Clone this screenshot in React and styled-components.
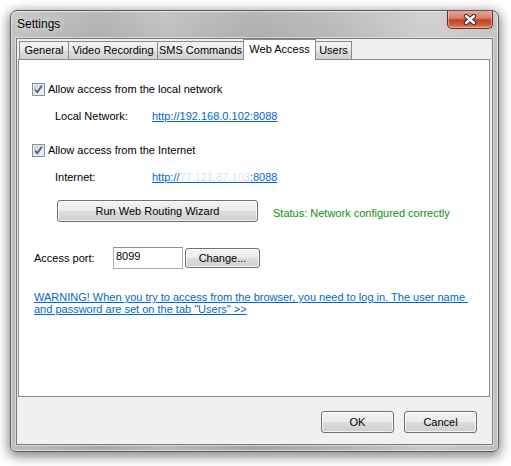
import React from "react";
import styled, { createGlobalStyle } from "styled-components";

const Global = createGlobalStyle`
  html, body { margin: 0; padding: 0; background: #ffffff; }
  body { font-family: "Liberation Sans", Arial, sans-serif; font-size: 11px; color: #000; }
  * { box-sizing: border-box; }
`;

const Stage = styled.div`
  width: 511px;
  height: 466px;
  padding: 10px 0 0 10px;
`;

const Window = styled.div`
  width: 489px;
  height: 442px;
  border: 1px solid #555a60;
  border-radius: 7px 7px 6px 6px;
  background:
    linear-gradient(180deg, rgba(255,255,255,0.18) 0%, rgba(255,255,255,0) 12%),
    linear-gradient(90deg, #bdbdbd 0%, #a9a9a9 18%, #b8b8b8 32%, #a6a6a6 50%, #b3b3b3 68%, #c9c9c9 85%, #bfbfbf 100%);
  box-shadow: inset 0 0 0 1px rgba(255,255,255,0.55), 0 3px 11px 2px rgba(0,0,0,0.45);
  display: flex;
  flex-direction: column;
  overflow: hidden;
`;

const TitleBar = styled.div`
  height: 27px;
  display: flex;
  align-items: flex-start;
  justify-content: space-between;
  padding: 0 5px 0 6px;
`;

const Title = styled.div`
  padding-top: 6px;
  font-size: 12px;
  line-height: 14px;
  color: #000;
  text-shadow: 0 0 6px rgba(255,255,255,0.9);
`;

const CloseButton = styled.div`
  width: 46px;
  height: 19px;
  margin-top: -1px;
  border: 1px solid #6b2a1e;
  border-top: none;
  border-radius: 0 0 5px 5px;
  background: linear-gradient(180deg, #e9a899 0%, #d9806b 45%, #c2432a 55%, #cf5a3e 80%, #e08a6a 100%);
  box-shadow: inset 0 0 0 1px rgba(255,210,200,0.5);
  display: flex;
  align-items: center;
  justify-content: center;
`;

const Client = styled.div`
  margin: 0 5px 6px 5px;
  height: 407px;
  border: 1px solid #7a7a7a;
  box-shadow: 0 0 0 1px rgba(255,255,255,0.45);
  background: #f0f0f0;
  display: flex;
  flex-direction: column;
`;

const TabArea = styled.div`
  padding: 0 2px 0 1px;
`;

const TabStrip = styled.div`
  height: 20px;
  display: flex;
  align-items: flex-start;
  padding-left: 1px;
  position: relative;
  z-index: 1;
`;

const Tab = styled.div`
  width: ${(p) => p.$w}px;
  height: ${(p) => (p.$active ? "21px" : "18px")};
  margin-top: ${(p) => (p.$active ? "0" : "2px")};
  margin-left: -1px;
  padding-top: ${(p) => (p.$active ? "2px" : "1px")};
  border: 1px solid #898c95;
  border-bottom: none;
  background: ${(p) =>
    p.$active ? "#ffffff" : "linear-gradient(180deg, #f2f2f2 0%, #ebebeb 50%, #dddddd 51%, #cfcfcf 100%)"};
  position: relative;
  z-index: ${(p) => (p.$active ? 2 : 1)};
  line-height: 14px;
  text-align: center;
  white-space: nowrap;
  &:first-child { margin-left: 0; }
`;

const Panel = styled.div`
  height: 338px;
  border: 1px solid #898c95;
  background: #ffffff;
  display: flex;
  flex-direction: column;
  padding: 0 0 0 13px;
`;

const Row = styled.div`
  display: flex;
  align-items: center;
  height: ${(p) => p.$h || 15}px;
  margin-top: ${(p) => p.$mt || 0}px;
  padding-left: ${(p) => p.$indent || 0}px;
  line-height: 15px;
  white-space: nowrap;
`;

const CheckLabel = styled.span`
  margin-left: 3px;
`;

const FieldLabel = styled.span`
  width: 97px;
`;

const Link = styled.a`
  color: #0066cc;
  text-decoration: underline;
  cursor: pointer;
`;

const Hidden = styled.span`
  color: rgba(0, 102, 204, 0.22);
`;

const Button = styled.div`
  width: ${(p) => p.$w}px;
  height: ${(p) => p.$h || 22}px;
  border: 1px solid #707070;
  border-radius: 3px;
  background: linear-gradient(180deg, #f2f2f2 0%, #ebebeb 50%, #dddddd 51%, #cfcfcf 100%);
  box-shadow: inset 0 0 0 1px rgba(255,255,255,0.75);
  display: flex;
  align-items: center;
  justify-content: center;
  line-height: 14px;
  white-space: nowrap;
  margin-left: ${(p) => p.$ml || 0}px;
  flex-shrink: 0;
`;

const Status = styled.span`
  color: #0c900c;
  margin-left: 15px;
  padding-top: 5px;
`;

const PortLabel = styled.span`
  width: 81px;
  padding-left: 2px;
`;

const Input = styled.div`
  width: 70px;
  height: 22px;
  border: 1px solid #abadb3;
  border-top-color: #8e8f8f;
  background: #fff;
  padding: 1px 2px;
  line-height: 15px;
`;

const Warning = styled.div`
  margin-top: 22px;
  padding-left: 2px;
  line-height: 12px;
  color: #0066cc;
  text-decoration: underline;
  white-space: nowrap;
`;

const Footer = styled.div`
  display: flex;
  justify-content: flex-end;
  gap: 10px;
  padding: 14px 15px 0 0;
`;

const Check = () => (
  <svg width="13" height="13" viewBox="0 0 13 13">
    <defs>
      <linearGradient id="cbg" x1="0" y1="0" x2="1" y2="1">
        <stop offset="0" stopColor="#cbcfd5" />
        <stop offset="1" stopColor="#f6f6f6" />
      </linearGradient>
    </defs>
    <rect x="0.5" y="0.5" width="12" height="12" fill="#f4f4f4" stroke="#8f8f8f" />
    <rect x="2" y="2" width="9" height="9" fill="url(#cbg)" stroke="#d0d3d8" strokeWidth="0.5" />
    <path d="M3.2 6.6 L5.3 9.2 L9.8 2.8" fill="none" stroke="#4a5f97" strokeWidth="1.8" strokeLinejoin="round" />
  </svg>
);

const CloseX = () => (
  <svg width="14" height="11" viewBox="0 0 14 11">
    <path d="M3 2 L11 9 M11 2 L3 9" stroke="#3a2a28" strokeWidth="4.4" strokeLinecap="round" />
    <path d="M3 2 L11 9 M11 2 L3 9" stroke="#ffffff" strokeWidth="2.4" strokeLinecap="round" />
  </svg>
);

const tabs = [
  { label: "General", w: 50 },
  { label: "Video Recording", w: 90 },
  { label: "SMS Commands", w: 87 },
  { label: "Web Access", w: 73 },
  { label: "Users", w: 37 },
];

export default function App() {
  return (
    <>
      <Global />
      <Stage>
        <Window>
          <TitleBar>
            <Title>Settings</Title>
            <CloseButton>
              <CloseX />
            </CloseButton>
          </TitleBar>
          <Client>
            <TabArea>
              <TabStrip>
                {tabs.map((t) => (
                  <Tab key={t.label} $w={t.w} $active={t.label === "Web Access"}>
                    {t.label}
                  </Tab>
                ))}
              </TabStrip>
              <Panel>
                <Row $mt={22}>
                  <Check />
                  <CheckLabel>Allow access from the local network</CheckLabel>
                </Row>
                <Row $mt={12} $indent={23}>
                  <FieldLabel>Local Network:</FieldLabel>
                  <Link>http://192.168.0.102:8088</Link>
                </Row>
                <Row $mt={19}>
                  <Check />
                  <CheckLabel>Allow access from the Internet</CheckLabel>
                </Row>
                <Row $mt={12} $indent={23}>
                  <FieldLabel>Internet:</FieldLabel>
                  <Link>
                    http://<Hidden>77.121.87.103</Hidden>:8088
                  </Link>
                </Row>
                <Row $mt={15} $h={22} $indent={25}>
                  <Button $w={201}>Run Web Routing Wizard</Button>
                  <Status>Status: Network configured correctly</Status>
                </Row>
                <Row $mt={25} $h={22}>
                  <PortLabel>Access port:</PortLabel>
                  <Input>8099</Input>
                  <Button $w={75} $h={20} $ml={2}>Change...</Button>
                </Row>
                <Warning>
                  WARNING! When you try to access from the browser, you need to log in. The user name&nbsp;
                  <br />
                  and password are set on the tab "Users" &gt;&gt;
                </Warning>
              </Panel>
            </TabArea>
            <Footer>
              <Button $w={73}>OK</Button>
              <Button $w={73}>Cancel</Button>
            </Footer>
          </Client>
        </Window>
      </Stage>
    </>
  );
}
